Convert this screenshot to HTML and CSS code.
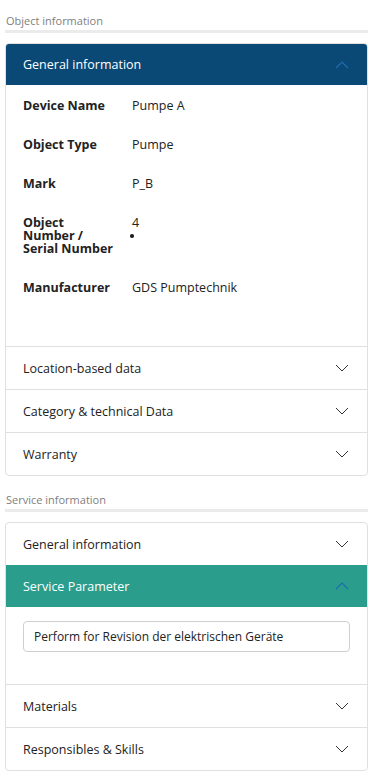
FILE: index.html
```html
<!DOCTYPE html>
<html>
<head>
  <title>Object</title>
  <link rel="stylesheet" href="styles.css">
</head>
<body>
  <div id="page">
    <div class="section-title">Object information</div>
    <div class="card">
      <div class="panel-head open blue">
        <span>General information</span>
        <svg class="chev" width="14" height="8" viewBox="0 0 14 8"><path d="M1 7 L7 1 L13 7" fill="none" stroke="#1f6db0" stroke-width="1.2"/></svg>
      </div>
      <div class="panel-body info">
        <div class="row"><div class="label">Device Name</div><div class="value">Pumpe A</div></div>
        <div class="row"><div class="label">Object Type</div><div class="value">Pumpe</div></div>
        <div class="row"><div class="label">Mark</div><div class="value">P_B</div></div>
        <div class="row"><div class="label">Object Number / Serial Number</div><div class="value">4<span class="dot"></span></div></div>
        <div class="row"><div class="label">Manufacturer</div><div class="value">GDS Pumptechnik</div></div>
      </div>
      <div class="panel-head">
        <span>Location-based data</span>
        <svg class="chev" width="14" height="8" viewBox="0 0 14 8"><path d="M1 1 L7 7 L13 1" fill="none" stroke="#333" stroke-width="1"/></svg>
      </div>
      <div class="panel-head">
        <span>Category &amp; technical Data</span>
        <svg class="chev" width="14" height="8" viewBox="0 0 14 8"><path d="M1 1 L7 7 L13 1" fill="none" stroke="#333" stroke-width="1"/></svg>
      </div>
      <div class="panel-head">
        <span>Warranty</span>
        <svg class="chev" width="14" height="8" viewBox="0 0 14 8"><path d="M1 1 L7 7 L13 1" fill="none" stroke="#333" stroke-width="1"/></svg>
      </div>
    </div>

    <div class="section-title">Service information</div>
    <div class="card">
      <div class="panel-head first">
        <span>General information</span>
        <svg class="chev" width="14" height="8" viewBox="0 0 14 8"><path d="M1 1 L7 7 L13 1" fill="none" stroke="#333" stroke-width="1"/></svg>
      </div>
      <div class="panel-head open teal">
        <span>Service Parameter</span>
        <svg class="chev" width="14" height="8" viewBox="0 0 14 8"><path d="M1 7 L7 1 L13 7" fill="none" stroke="#1f6db0" stroke-width="1.2"/></svg>
      </div>
      <div class="panel-body params">
        <div class="input">Perform for Revision der elektrischen Geräte</div>
      </div>
      <div class="panel-head">
        <span>Materials</span>
        <svg class="chev" width="14" height="8" viewBox="0 0 14 8"><path d="M1 1 L7 7 L13 1" fill="none" stroke="#333" stroke-width="1"/></svg>
      </div>
      <div class="panel-head">
        <span>Responsibles &amp; Skills</span>
        <svg class="chev" width="14" height="8" viewBox="0 0 14 8"><path d="M1 1 L7 7 L13 1" fill="none" stroke="#333" stroke-width="1"/></svg>
      </div>
    </div>
  </div>
</body>
</html>
```

FILE: styles.css
```css
body {
  margin: 0;
  background-color: #fff;
  font-family: "Open Sans", "Noto Sans", sans-serif;
  color: #222;
}
#page {
  padding: 13px 8px 10px 5px;
}
.section-title {
  font-size: 11px;
  color: #808080;
  line-height: 16px;
  padding-left: 1px;
  padding-bottom: 1px;
  border-bottom: 3px solid #ebebeb;
  margin-bottom: 10px;
}
.card {
  border: 1px solid #e0e0e0;
  border-radius: 4px;
  overflow: hidden;
  margin-bottom: 16px;
}
.panel-head {
  display: flex;
  align-items: center;
  justify-content: space-between;
  height: 43px;
  padding: 0 18px 0 17px;
  font-size: 12.5px;
  border-top: 1px solid #e0e0e0;
  box-sizing: border-box;
}
.panel-head.first {
  border-top: none;
  height: 42px;
}
.panel-head.open {
  color: #fff;
  border-top: none;
  height: 41px;
}
.panel-head.blue {
  background-color: #0a4876;
}
.panel-head.teal {
  background-color: #2a9d8c;
  height: 42px;
}
.chev {
  display: block;
}
.panel-body.info {
  padding: 14px 17px 52px 17px;
  display: flex;
  flex-direction: column;
  gap: 26px;
}
.row {
  display: flex;
  font-size: 12.5px;
  line-height: 13px;
}
.label {
  width: 95px;
  margin-right: 14px;
  font-weight: bold;
  flex-shrink: 0;
}
.value {
  display: flex;
  flex-direction: column;
}
.dot {
  width: 3.5px;
  height: 3.5px;
  border-radius: 50%;
  background-color: #222;
  margin: 5px 0 0 -2px;
}
.panel-body.params {
  padding: 14px 17px 32px 17px;
}
.input {
  border: 1px solid #cfcfcf;
  border-radius: 4px;
  height: 31px;
  box-sizing: border-box;
  padding: 0 10px;
  display: flex;
  align-items: center;
  font-size: 12px;
}
```
